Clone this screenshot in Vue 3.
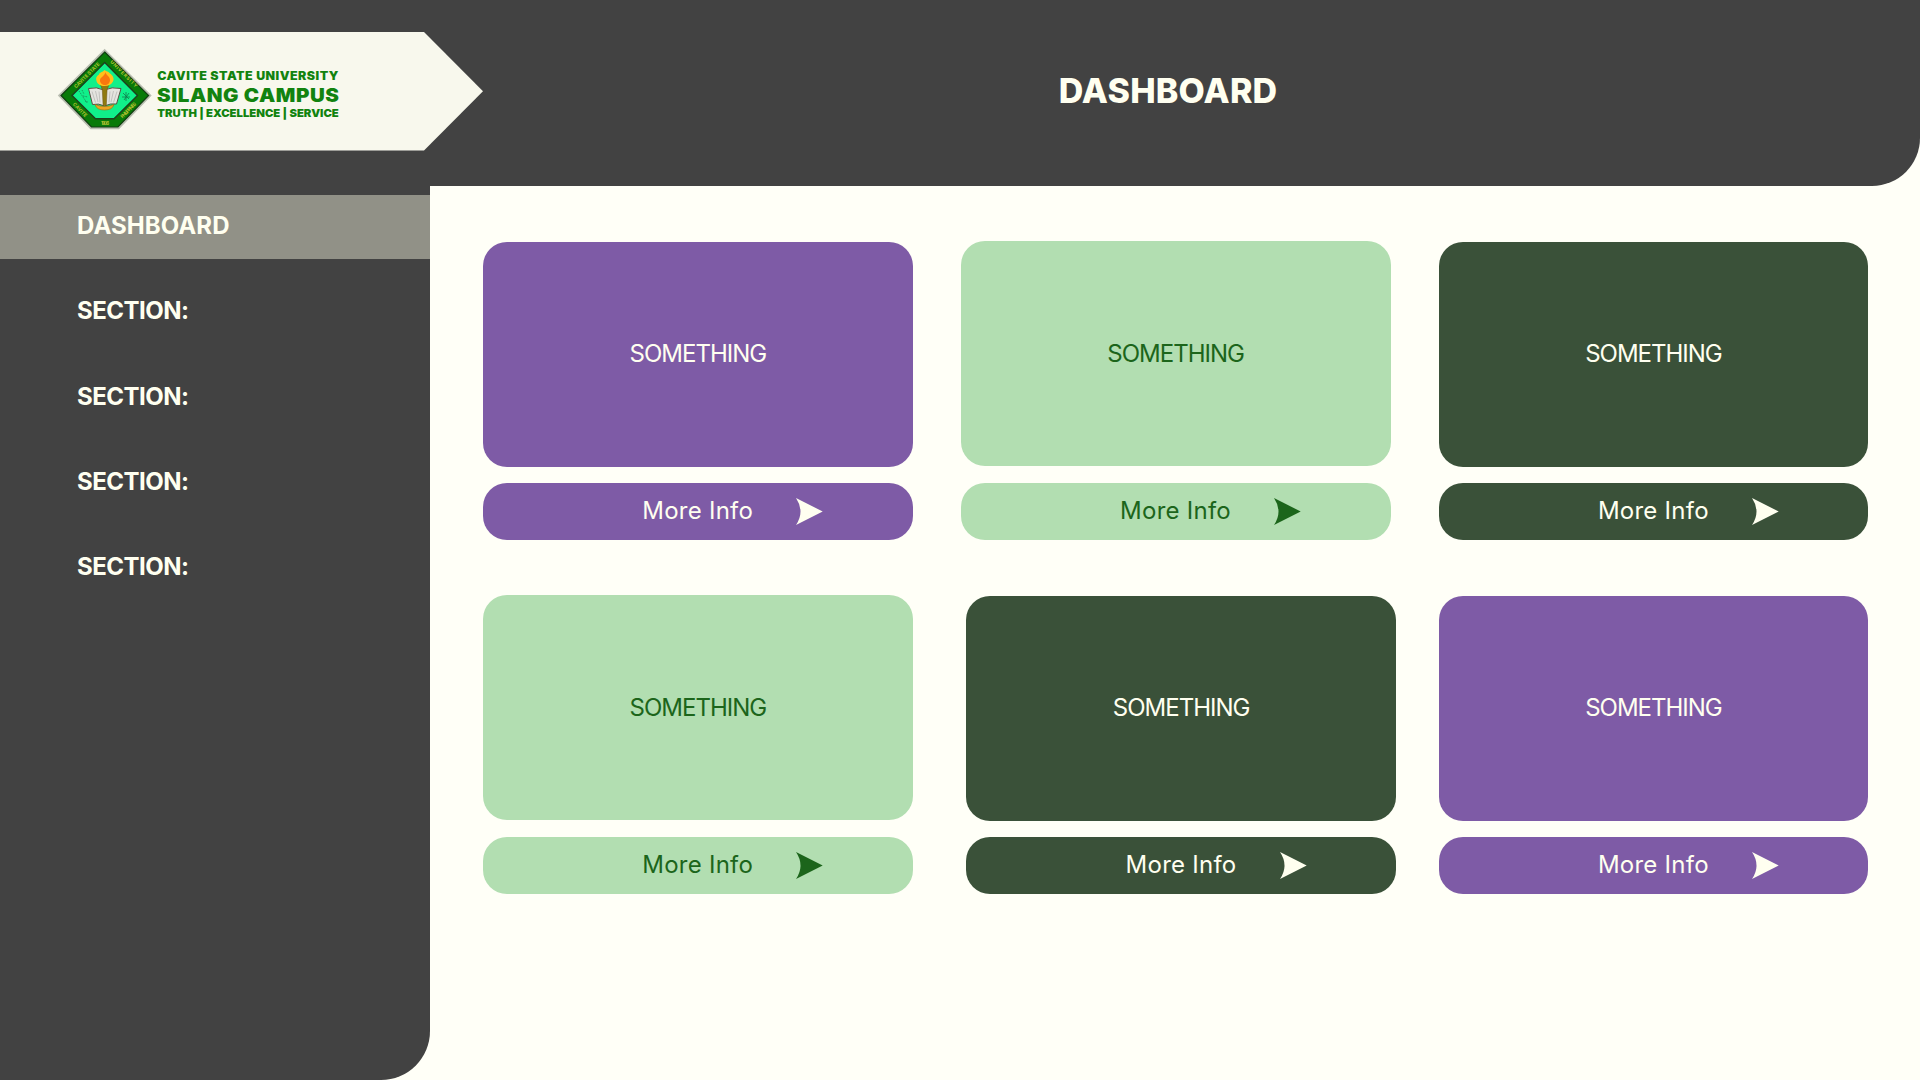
<script setup>
const navItems = [
  { label: 'DASHBOARD', active: true },
  { label: 'SECTION:' },
  { label: 'SECTION:' },
  { label: 'SECTION:' },
  { label: 'SECTION:' },
]

const rows = [
  {
    name: 'first',
    cards: [
      { tone: 'purple' },
      { tone: 'mint', raised: true },
      { tone: 'forest' },
    ],
  },
  {
    name: 'second',
    cards: [
      { tone: 'mint', raised: true },
      { tone: 'forest' },
      { tone: 'purple' },
    ],
  },
]
</script>

<template>
  <div class="page">
    <header class="header">
      <div class="banner">
        <svg class="logo" width="290" height="90" viewBox="55 45 290 90">
          <polygon points="104.7,50.5 150,95.5 118.5,128 91,128 59.5,95.5" fill="#087a08" stroke="#b9bdb0" stroke-width="2.4" />
          <polygon points="104.7,52 148.6,95.5 118,127 91.5,127 61,95.5" fill="#087a08" stroke="#123f12" stroke-width="1.2" />
          <polygon points="104.7,62.5 137.5,95.5 114,118.8 95.5,118.8 72,95.5" fill="#10f08a" stroke="#1d3f1d" stroke-width="1.4" />
          <g class="seal-text">
            <text transform="translate(76 88.5) rotate(-45)" textLength="34">CAVITE STATE</text>
            <text transform="translate(110 62.3) rotate(45)" textLength="36">UNIVERSITY</text>
            <text transform="translate(72.5 104.5) rotate(46)" textLength="18">CAVITE</text>
            <text transform="translate(122.5 118.5) rotate(-46)" textLength="20">PHILIPPINES</text>
            <text x="101" y="125" textLength="8">1906</text>
          </g>
          <path d="M79 91l8 12M82 90l2 4M83 96l5 1M85 101l3 1" stroke="#1b8f5b" stroke-width=".9" stroke-dasharray="1.5 1" fill="none" />
          <path d="M123 93l6 6M129 93l-5 7M122 97h8M126 92v9" stroke="#137b4b" stroke-width=".8" fill="none" />
          <path d="M88.500 88.500q8-2 15.500 1.500q8-3.500 17-1.500l-4.500 15.500q-6-1-12 2q-6-3-12-1.500z" fill="#e4e4df" stroke="#5a5044" stroke-width="1" />
          <path d="M92 91.500l3.500 11M95.500 91l2.500 11M99 91.500l1 11M110 91.500l-1 11M113.500 91l-2.500 11M117 91.500l-3.500 11" stroke="#aaaaa8" stroke-width=".6" fill="none" />
          <path d="M95 104.500q9.500 4 19 0q-1.500 5.500-9.500 5.500t-9.500-5.500z" fill="#eda321" stroke="#9c6a13" stroke-width=".6" />
          <path d="M100.300 84.500h8.800l-2 5l-.8 16h-3.200l-.8-16z" fill="#8f7a10" stroke="#6d5310" stroke-width=".5" />
          <path d="M104.500 70c2 2 4 1 5.500 3.500c3 2 4.500 5 3 8c-1.500 3-4.500 4.500-8.500 4.500s-7-1.500-8-5c-1-3 0-5 2.500-6.500c.5-2.500 3.500-2 5.500-4.500z" fill="#ffc21a" />
          <path d="M105.500 72c0 3 4.500 4 4.500 8c0 3-2.300 5-5 5s-5-2-5-4.500c0-3.500 4.500-4 5.500-8.500z" fill="#f9770e" />
          <g class="logo-text">
            <text x="157.300" y="80" font-size="11.500" letter-spacing=".45" textLength="181.500" lengthAdjust="spacingAndGlyphs">CAVITE STATE UNIVERSITY</text>
            <text x="157" y="101.700" font-size="18.500" letter-spacing=".5" textLength="182.500" lengthAdjust="spacingAndGlyphs">SILANG CAMPUS</text>
            <text x="157.300" y="117.200" font-size="10.700" textLength="181.500" lengthAdjust="spacingAndGlyphs">TRUTH | EXCELLENCE | SERVICE</text>
          </g>
        </svg>
      </div>
      <h1 class="title">DASHBOARD</h1>
    </header>

    <div class="body">
      <nav class="sidebar">
        <a
          v-for="(item, i) in navItems"
          :key="i"
          class="nav-item"
          :class="{ active: item.active }"
        >{{ item.label }}</a>
      </nav>

      <main class="content">
        <section v-for="row in rows" :key="row.name" class="row" :class="row.name">
          <article
            v-for="(card, i) in row.cards"
            :key="i"
            class="card"
            :class="[card.tone, { raised: card.raised }]"
          >
            <div class="panel"><span class="panel-label">SOMETHING</span></div>
            <div class="more">
              <span class="more-label">More Info</span>
              <svg class="arrow" width="27" height="28" viewBox="0 0 27 28">
                <path d="M0 0L26.700 13.500L0 27Q9 13.500 0 0z" fill="currentColor" />
              </svg>
            </div>
          </article>
        </section>
      </main>
    </div>
  </div>
</template>

<style>
body {
  margin: 0;
  background: #fffff7;
}
</style>

<style scoped>
.page {
  width: 1920px;
  height: 1080px;
  overflow: hidden;
  background: #fffff7;
  font-family: Inter, "Open Sans", sans-serif;
  color: #fffff0;
}

.header {
  display: flex;
  align-items: flex-start;
  box-sizing: border-box;
  height: 186px;
  padding-top: 32px;
  background: #424242;
  border-bottom-right-radius: 48px;
}

.banner {
  flex: none;
  box-sizing: border-box;
  width: 483px;
  height: 118.500px;
  padding: 13px 0 0 55px;
  background: #f8f8ed;
  clip-path: polygon(0 0, 424px 0, 100% 50%, 424px 100%, 0 100%);
}

.logo {
  display: block;
}

.logo-text {
  font-family: Inter, "Liberation Sans", sans-serif;
  font-weight: 900;
  fill: #12830f;
}

.seal-text {
  font-family: Inter, "Liberation Sans", sans-serif;
  font-size: 4.800px;
  font-weight: 700;
  fill: #b5c232;
}

.title {
  width: 1370px;
  margin: 0 67px 0 0;
  line-height: 117px;
  font-size: 34px;
  font-weight: 800;
  letter-spacing: 0.200px;
  text-align: center;
}

.body {
  display: flex;
  height: 894px;
}

.sidebar {
  display: flex;
  flex: none;
  flex-direction: column;
  gap: 21.250px;
  box-sizing: border-box;
  width: 429.600px;
  padding-top: 9px;
  background: #424242;
  border-bottom-right-radius: 49px;
}

.nav-item {
  height: 64px;
  padding-left: 77px;
  line-height: 61px;
  font-size: 24px;
  font-weight: 700;
  letter-spacing: -0.500px;
}

.nav-item.active {
  background: #919187;
  letter-spacing: 0.080px;
}

.content {
  padding: 56px 0 0 53.400px;
}

.row {
  display: flex;
  height: 298px;
  margin-bottom: 56px;
}

.row.first {
  gap: 48px;
}

.row.second {
  gap: 53.500px;
}

.row.second .card:last-child {
  margin-left: -11px;
}

.card {
  display: flex;
  flex: none;
  flex-direction: column;
  gap: 16px;
  width: 429.800px;
}

.card.raised {
  gap: 17px;
  margin-top: -1px;
}

.panel {
  display: flex;
  align-items: center;
  justify-content: center;
  box-sizing: border-box;
  height: 225px;
  padding-bottom: 1px;
  border-radius: 24px;
}

.raised .panel {
  padding: 1px 0 0;
}

.panel-label {
  font-size: 24px;
  line-height: 30px;
  letter-spacing: -1px;
}

.more {
  display: grid;
  grid-template-columns: 313.400px 1fr;
  align-items: center;
  box-sizing: border-box;
  height: 57px;
  border-radius: 24px;
}

.more-label {
  padding: 0 0 2px 159.300px;
  font-size: 24px;
  line-height: 30px;
  letter-spacing: 0.250px;
  white-space: nowrap;
}

.arrow {
  display: block;
}

.purple .panel,
.purple .more {
  background: #7e5ba6;
}

.mint {
  color: #1c651b;
}

.mint .panel,
.mint .more {
  background: #b2deb1;
}

.forest .panel,
.forest .more {
  background: #3a5139;
}
</style>
